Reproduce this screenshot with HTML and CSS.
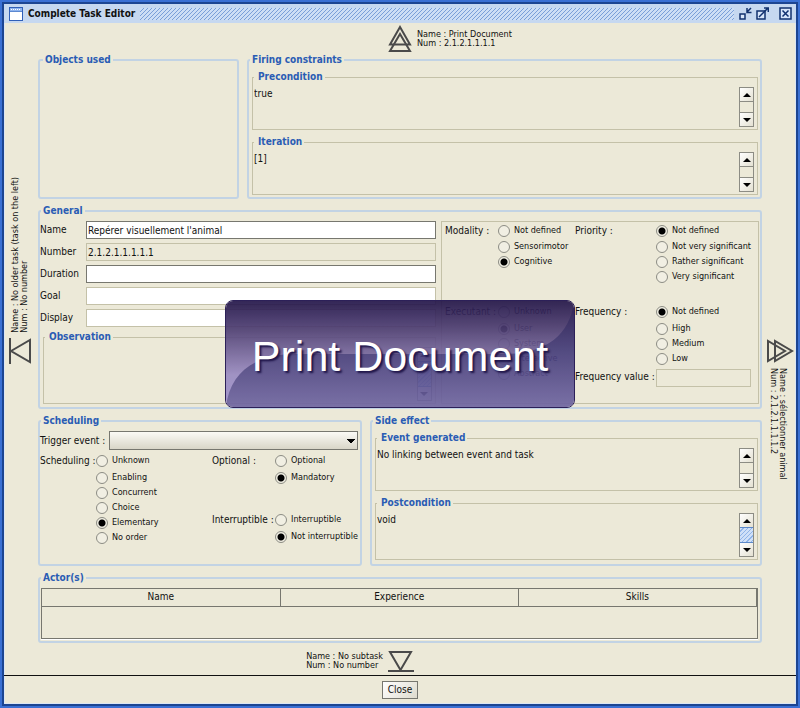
FILE: index.html
```html
<!DOCTYPE html>
<html lang="en">
<head>
<meta charset="utf-8">
<title>Complete Task Editor</title>
<link rel="stylesheet" href="styles.css">
</head>
<body>
<div class="window">
  <header class="titlebar">
    <svg class="app-icon" width="14" height="14" viewBox="0 0 14 14" shape-rendering="crispEdges" aria-hidden="true">
      <rect x="0.5" y="0.5" width="13" height="13" rx="1" fill="#fff" stroke="#2f5fb8"/>
      <rect x="1" y="1" width="12" height="3" fill="#8fb4ee"/>
      <path d="M2 2.5h10" stroke="#fff" stroke-dasharray="1 1"/>
      <path d="M1 4.5h12" stroke="#5c88d0"/>
    </svg>
    <h1 class="title">Complete Task Editor</h1>
    <svg class="grip" aria-hidden="true">
      <defs>
        <pattern id="hatch" width="4" height="4" patternUnits="userSpaceOnUse">
          <rect width="4" height="4" fill="#cddef5"/>
          <path d="M0 3h1v1h-1zM1 2h1v1h-1zM2 1h1v1h-1zM3 0h1v1h-1z" fill="#7a9fd8"/>
        </pattern>
      </defs>
      <rect width="100%" height="100%" fill="url(#hatch)" shape-rendering="crispEdges"/>
    </svg>
    <div class="window-buttons">
      <button class="window-button" aria-label="Minimize">
        <svg width="13" height="13" viewBox="0 0 13 13" fill="none" stroke="#10306e" stroke-width="1.5"><rect x="1" y="7" width="5" height="5" fill="#d8e6fa"/><path d="M12 1L8.500 4.500M8 1v4.500h4.500"/></svg>
      </button>
      <button class="window-button" aria-label="Maximize">
        <svg width="13" height="13" viewBox="0 0 13 13" fill="none" stroke="#10306e" stroke-width="1.5"><rect x="1" y="4" width="8" height="8" fill="#d8e6fa"/><path d="M3 10L12 1M8 1h4.300v4"/></svg>
      </button>
      <button class="window-button close-button" aria-label="Close window">
        <svg width="13" height="13" viewBox="0 0 13 13" fill="none" stroke="#10306e" stroke-width="1.500"><rect x="1" y="1" width="11" height="11" fill="#d8e6fa"/><path d="M3.500 3.500l6 6M9.500 3.500l-6 6"/></svg>
      </button>
    </div>
  </header>

  <nav class="task-link parent-task">
    <svg class="parent-icon" width="24" height="28" viewBox="0 0 24 28" fill="none" stroke="#4a4a4a" stroke-width="2" aria-hidden="true"><path d="M12 2L2 19.500h20z"/><path d="M12 9L2 26h20z"/></svg>
    <p class="task-text">Name : Print Document<br>Num : 2.1.2.1.1.1.1</p>
  </nav>

  <div class="workspace">
    <nav class="side-link older-task">
      <p class="side-text">Name : No older task (task on the left)<br>Num : No number</p>
      <svg class="side-icon" width="24" height="26" viewBox="0 0 24 26" fill="none" stroke="#4a4a4a" stroke-width="2" aria-hidden="true"><path d="M2 0v26M3 13L22 2v22z"/></svg>
    </nav>

    <main class="panels">
      <div class="row row-top">
        <fieldset class="panel"><legend>Objects used</legend></fieldset>
        <fieldset class="panel stack">
          <legend>Firing constraints</legend>
          <fieldset class="subpanel">
            <legend>Precondition</legend>
            <div class="scroll-pane">
              <textarea aria-label="Precondition">true</textarea>
              <div class="scrollbar"><button aria-label="Scroll up" class="up"></button><span class="track"></span><button aria-label="Scroll down" class="down"></button></div>
            </div>
          </fieldset>
          <fieldset class="subpanel">
            <legend>Iteration</legend>
            <div class="scroll-pane">
              <textarea aria-label="Iteration">[1]</textarea>
              <div class="scrollbar"><button aria-label="Scroll up" class="up"></button><span class="track"></span><button aria-label="Scroll down" class="down"></button></div>
            </div>
          </fieldset>
        </fieldset>
      </div>

      <fieldset class="panel general">
        <legend>General</legend>
        <div class="general-grid">
          <div class="general-left">
            <div class="fields">
              <label for="name">Name</label><input id="name" class="strong" type="text" value="Repérer visuellement l'animal">
              <label for="number">Number</label><input id="number" type="text" value="2.1.2.1.1.1.1.1" readonly>
              <label for="duration">Duration</label><input id="duration" class="strong" type="text">
              <label for="goal">Goal</label><input id="goal" type="text">
              <label for="display">Display</label><input id="display" type="text">
            </div>
            <fieldset class="subpanel observation">
              <legend>Observation</legend>
              <div class="scroll-pane">
                <textarea aria-label="Observation"></textarea>
                <div class="scrollbar"><button aria-label="Scroll up" class="up"></button><span class="track thumb"></span><button aria-label="Scroll down" class="down"></button></div>
              </div>
            </fieldset>
          </div>
          <div class="options">
            <div class="option-column">
              <div class="choice" role="radiogroup" aria-labelledby="l-mod">
                <span id="l-mod">Modality :</span>
                <div class="radios">
                  <label><input type="radio" name="mod">Not defined</label>
                  <label><input type="radio" name="mod">Sensorimotor</label>
                  <label><input type="radio" name="mod" checked>Cognitive</label>
                </div>
              </div>
              <div class="choice" role="radiogroup" aria-labelledby="l-exe">
                <span id="l-exe">Executant :</span>
                <div class="radios">
                  <label><input type="radio" name="exe">Unknown</label>
                  <label><input type="radio" name="exe" checked>User</label>
                  <label><input type="radio" name="exe">System</label>
                  <label><input type="radio" name="exe">Interactive</label>
                  <label><input type="radio" name="exe">Abstract</label>
                </div>
              </div>
            </div>
            <div class="option-column wide">
              <div class="choice" role="radiogroup" aria-labelledby="l-pri">
                <span id="l-pri">Priority :</span>
                <div class="radios">
                  <label><input type="radio" name="pri" checked>Not defined</label>
                  <label><input type="radio" name="pri">Not very significant</label>
                  <label><input type="radio" name="pri">Rather significant</label>
                  <label><input type="radio" name="pri">Very significant</label>
                </div>
              </div>
              <div class="choice" role="radiogroup" aria-labelledby="l-fre">
                <span id="l-fre">Frequency :</span>
                <div class="radios">
                  <label><input type="radio" name="fre" checked>Not defined</label>
                  <label><input type="radio" name="fre">High</label>
                  <label><input type="radio" name="fre">Medium</label>
                  <label><input type="radio" name="fre">Low</label>
                </div>
              </div>
              <div class="choice value-row">
                <label for="freq-value">Frequency value :</label>
                <input id="freq-value" type="text" readonly>
              </div>
            </div>
          </div>
        </div>
      </fieldset>

      <div class="row row-middle">
        <fieldset class="panel scheduling">
          <legend>Scheduling</legend>
          <div class="trigger">
            <label for="trigger">Trigger event :</label>
            <select id="trigger"><option></option></select>
          </div>
          <div class="schedule-grid">
            <div class="choice" role="radiogroup" aria-labelledby="l-sch">
              <span id="l-sch">Scheduling :</span>
              <div class="radios">
                <label><input type="radio" name="sch">Unknown</label>
                <label><input type="radio" name="sch">Enabling</label>
                <label><input type="radio" name="sch">Concurrent</label>
                <label><input type="radio" name="sch">Choice</label>
                <label><input type="radio" name="sch" checked>Elementary</label>
                <label><input type="radio" name="sch">No order</label>
              </div>
            </div>
            <div class="schedule-side">
              <div class="choice" role="radiogroup" aria-labelledby="l-opt">
                <span id="l-opt">Optional :</span>
                <div class="radios">
                  <label><input type="radio" name="opt">Optional</label>
                  <label><input type="radio" name="opt" checked>Mandatory</label>
                </div>
              </div>
              <div class="choice" role="radiogroup" aria-labelledby="l-int">
                <span id="l-int">Interruptible :</span>
                <div class="radios">
                  <label><input type="radio" name="int">Interruptible</label>
                  <label><input type="radio" name="int" checked>Not interruptible</label>
                </div>
              </div>
            </div>
          </div>
        </fieldset>
        <fieldset class="panel stack">
          <legend>Side effect</legend>
          <fieldset class="subpanel">
            <legend>Event generated</legend>
            <div class="scroll-pane">
              <textarea aria-label="Event generated">No linking between event and task</textarea>
              <div class="scrollbar"><button aria-label="Scroll up" class="up"></button><span class="track"></span><button aria-label="Scroll down" class="down"></button></div>
            </div>
          </fieldset>
          <fieldset class="subpanel postcondition">
            <legend>Postcondition</legend>
            <div class="scroll-pane">
              <textarea aria-label="Postcondition">void</textarea>
              <div class="scrollbar"><button aria-label="Scroll up" class="up"></button><span class="track thumb"></span><button aria-label="Scroll down" class="down"></button></div>
            </div>
          </fieldset>
        </fieldset>
      </div>

      <fieldset class="panel actors">
        <legend>Actor(s)</legend>
        <div class="table-box">
          <table>
            <thead><tr><th>Name</th><th>Experience</th><th>Skills</th></tr></thead>
            <tbody></tbody>
          </table>
        </div>
      </fieldset>
    </main>

    <nav class="side-link newer-task">
      <svg class="side-icon" width="28" height="24" viewBox="0 0 28 24" fill="none" stroke="#4a4a4a" stroke-width="2" aria-hidden="true"><path d="M2 2v20L19 12z"/><path d="M9 2v20L26 12z"/></svg>
      <p class="side-text">Name : sélectionner animal<br>Num : 2.1.2.1.1.1.1.2</p>
    </nav>
  </div>

  <nav class="task-link child-task">
    <p class="task-text">Name : No subtask<br>Num : No number</p>
    <svg class="child-icon" width="26" height="22" viewBox="0 0 26 22" fill="none" stroke="#4a4a4a" stroke-width="2" aria-hidden="true"><path d="M2 2h21L12.500 20z"/><path d="M0 21h26"/></svg>
  </nav>

  <footer class="footer"><button class="close">Close</button></footer>

  <div class="tooltip" role="status">
    <svg class="gloss" viewBox="0 0 350 108" preserveAspectRatio="none" aria-hidden="true">
      <defs>
        <linearGradient id="shade" x1="0" y1="0" x2="0" y2="1">
          <stop offset="0" stop-color="#231549"/><stop offset="0.250" stop-color="#4b3b70"/><stop offset="0.700" stop-color="#9a8bc2"/><stop offset="1" stop-color="#9c8ecb"/>
        </linearGradient>
        <linearGradient id="lower" x1="0" y1="0" x2="0" y2="1">
          <stop offset="0" stop-color="#1e1148"/><stop offset="0.450" stop-color="#443b78"/><stop offset="1" stop-color="#7066a2"/>
        </linearGradient>
      </defs>
      <rect width="350" height="108" fill="url(#shade)"/>
      <path d="M0 108C4 72 30 54 70 54H280C320 54 346 36 350 0V108z" fill="url(#lower)"/>
    </svg>
    <span class="tooltip-text">Print Document</span>
  </div>
</div>
</body>
</html>
```
FILE: styles.css
```css
* { box-sizing: border-box; }

body {
  margin: 0;
  padding: 2px;
  background: #3a70d4;
  color: #111;
  font: 10px/12px "DejaVu Sans Condensed", "DejaVu Sans", sans-serif;
}

h1, p { margin: 0; }

input, textarea, select, button { font: inherit; color: inherit; }

.window {
  position: relative;
  display: flex;
  flex-direction: column;
  min-height: calc(100vh - 4px);
  border: 2px solid #1c4592;
  background: #ece9d8;
  box-shadow: inset 0 0 0 1px #dbe6f4;
}

.titlebar {
  display: flex;
  align-items: center;
  gap: 5px;
  height: 19px;
  padding: 0 4px 0 5px;
  background: #c6d8f0;
}

.title {
  font: bold 10px/14px "DejaVu Sans Condensed", sans-serif;
  white-space: nowrap;
}

.grip { flex: 1; min-width: 0; height: 12px; }

.window-buttons { display: flex; gap: 4px; }

.window-button {
  display: flex;
  padding: 0;
  border: 0;
  background: none;
}

.close-button { margin-left: 6px; }

.task-link {
  display: grid;
  grid-template-columns: 1fr 24px 1fr;
  column-gap: 5px;
  align-items: center;
}

.task-text, .side-text { font-size: 9px; line-height: 9px; white-space: nowrap; }

.parent-task { height: 31px; }
.parent-icon { grid-column: 2; }
.child-task { height: 32px; padding-top: 4px; }
.child-task .task-text { justify-self: end; }

.workspace {
  flex: 1;
  display: grid;
  grid-template-columns: 34px 1fr 34px;
}

.side-link {
  display: grid;
  grid-template-rows: 1fr auto 1fr;
  justify-items: start;
  row-gap: 5px;
  padding: 4px 0 0 4px;
}

.side-text { margin-left: 3px; writing-mode: vertical-rl; }
.older-task .side-text { align-self: end; transform: rotate(180deg); }
.newer-task .side-icon { grid-row: 2; }
.newer-task .side-text { grid-row: 3; }

.panels { display: flex; flex-direction: column; gap: 6px; min-width: 0; }

.row { display: grid; gap: 8px; }
.row-top { grid-template-columns: 201fr 515fr; min-height: 145px; }
.row-middle { grid-template-columns: 324fr 392fr; min-height: 151px; }

fieldset { min-width: 0; margin: 0; }

legend {
  padding: 0 2px;
  color: #2a5cb4;
  font: bold 10px/12px "DejaVu Sans Condensed", "DejaVu Sans", sans-serif;
}

.panel {
  padding: 4px 2px 2px 3px;
  border: 2px solid #c2d3e4;
  border-radius: 3px;
}

.subpanel {
  padding: 4px 3px 2px 1px;
  border: 1px solid #c4c1a8;
}

.subpanel > legend { padding-left: 4px; }

.stack { padding-top: 5px; }
.stack > legend { margin-left: -2px; }
.stack > .subpanel + .subpanel { margin-top: 6px; }

.scroll-pane { display: flex; min-height: 40px; }

textarea {
  flex: 1;
  min-width: 0;
  height: auto;
  padding: 1px 0 0;
  border: 0;
  background: none;
  resize: none;
  overflow: hidden;
}

.scrollbar {
  display: flex;
  flex-direction: column;
  width: 15px;
  border: 1px solid #8c8c84;
}

.scrollbar button {
  display: flex;
  align-items: center;
  justify-content: center;
  height: 13px;
  padding: 0;
  border: 0;
  background: linear-gradient(135deg, #fff, #e4e1d2);
}

.scrollbar button::before {
  content: "";
  border: 4px solid transparent;
  border-top-width: 0;
  border-bottom: 4px solid #000;
}

.scrollbar .down::before { transform: rotate(180deg); }

.track { flex: 1; border: solid #8c8c84; border-width: 1px 0; }

.thumb {
  border-color: #5c88c8;
  background: repeating-linear-gradient(135deg, #cfe0f8 0 2px, #8fb4e8 2px 3px);
}

.postcondition .scroll-pane { min-height: 44px; }

.general { padding: 4px 1px 2px 0; min-height: 204px; }
.general > legend, .scheduling > legend { margin-left: 1px; }

.general-grid { display: grid; grid-template-columns: 397fr 317fr; column-gap: 5px; }

.fields {
  display: grid;
  grid-template-columns: 46px 1fr;
  grid-auto-rows: 18px;
  row-gap: 4px;
  align-items: center;
}

input[type="text"] {
  width: 100%;
  min-width: 0;
  height: 18px;
  padding: 0 1px;
  border: 1px solid #c4c1a8;
  background: #fff;
}

input.strong { border-color: #77776f; }
input[type="text"][readonly] { background: #ece9d8; }

.observation { margin: 4px 0 0 3px; }
.observation .scroll-pane { min-height: 54px; }

.options {
  display: grid;
  grid-template-columns: 130px 1fr;
  padding: 1px 7px 0 3px;
  border: 1px solid #c4c1a8;
}

.option-column { display: grid; align-content: start; grid-template-rows: 81px 65px auto; }

.choice { display: grid; grid-template-columns: 53px 1fr; align-items: start; line-height: 15px; white-space: nowrap; }
.wide .choice { grid-template-columns: 81px 1fr; }

.radios { display: grid; grid-template-rows: 17px; grid-auto-rows: 15px; font-size: 9px; }
.option-column .choice:first-child .radios { grid-template-rows: 16px; }
.radios label { display: flex; align-items: center; gap: 4px; height: 15px; }

input[type="radio"] {
  appearance: none;
  flex: none;
  width: 12px;
  height: 12px;
  margin: 0;
  border: 1px solid #8c8c84;
  border-radius: 50%;
  background: #f1efe3;
}

input[type="radio"]:checked { background: radial-gradient(circle, #000 3px, #f1efe3 4px); }

.scheduling { padding: 4px 2px 0 0; }

.trigger { display: flex; align-items: center; gap: 4px; margin-bottom: 3px; white-space: nowrap; }

select {
  flex: 1;
  min-width: 0;
  height: 19px;
  border: 1px solid #77776f;
  border-radius: 0;
  appearance: none;
  background:
    conic-gradient(from -45deg at 50% 100%, #000 90deg, transparent 0) right 2px center / 8px 4px no-repeat,
    linear-gradient(#fbfaf5, #d9d6c8);
}

.schedule-grid { display: grid; grid-template-columns: 172px 1fr; }
.schedule-grid .choice { grid-template-columns: 56px 1fr; }
.schedule-side { display: grid; grid-template-rows: 59px auto; align-content: start; }
.schedule-side .choice { grid-template-columns: 63px 1fr; }

.actors { padding: 4px 2px 2px 1px; }

.table-box { height: 51px; border: 1px solid #77776f; box-shadow: 0 1px 0 #fff; }

table { width: 100%; border-collapse: collapse; table-layout: fixed; }
th { height: 17px; padding: 0; border: solid #77776f; border-width: 0 1px 1px 0; font-weight: normal; }

.footer {
  display: flex;
  justify-content: center;
  height: 29px;
  padding-top: 5px;
  border-top: 1px solid #111;
}

.close {
  height: 18px;
  padding: 0 5px;
  border: 1px solid #77776f;
  background: linear-gradient(135deg, #fff, #dedbcd);
}

.tooltip {
  position: absolute;
  top: 296px;
  left: 50%;
  width: 350px;
  height: 108px;
  margin-left: -175px;
  display: grid;
  place-items: center;
  overflow: hidden;
  border: 1px solid #2c2058;
  border-radius: 8px;
}

.gloss { grid-area: 1 / 1; width: 100%; height: 100%; opacity: 0.92; }

.tooltip-text {
  grid-area: 1 / 1;
  z-index: 1;
  padding-top: 4px;
  color: #fff;
  font: 43px/48px "Liberation Sans", sans-serif;
  text-shadow: 2px 2px 2px #1e1448;
}
```
